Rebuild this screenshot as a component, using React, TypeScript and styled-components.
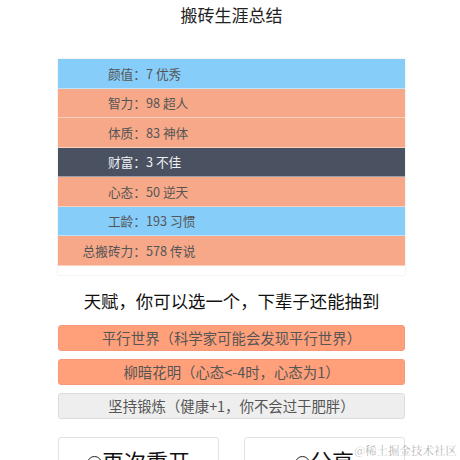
import React from 'react';
import styled, { createGlobalStyle } from 'styled-components';

type Tone = 'blue' | 'salmon' | 'dark';

interface Stat {
  label: string;
  value: string;
  tone: Tone;
}

interface Talent {
  name: string;
  desc: string;
  picked: boolean;
}

const stats: Stat[] = [
  { label: '颜值', value: '7 优秀', tone: 'blue' },
  { label: '智力', value: '98 超人', tone: 'salmon' },
  { label: '体质', value: '83 神体', tone: 'salmon' },
  { label: '财富', value: '3 不佳', tone: 'dark' },
  { label: '心态', value: '50 逆天', tone: 'salmon' },
  { label: '工龄', value: '193 习惯', tone: 'blue' },
  { label: '总搬砖力', value: '578 传说', tone: 'salmon' },
];

const talents: Talent[] = [
  { name: '平行世界', desc: '科学家可能会发现平行世界', picked: true },
  { name: '柳暗花明', desc: '心态<-4时，心态为1', picked: true },
  { name: '坚持锻炼', desc: '健康+1，你不会过于肥胖', picked: false },
];

const toneBg: Record<Tone, string> = {
  blue: '#87cdf9',
  salmon: '#f7a889',
  dark: '#4a5261',
};

const GlobalStyle = createGlobalStyle`
  body {
    margin: 0;
    background: #fff;
    font-family: "Noto Sans CJK SC", "Noto Sans", sans-serif;
  }
`;

const Page = styled.div`
  position: relative;
  height: 460px;
  overflow: hidden;
  padding: 0 55px 0 58px;
`;

const Title = styled.h1`
  margin: 3px 0 0;
  font-size: 17px;
  font-weight: 400;
  line-height: 24px;
  text-align: center;
  color: #222;
`;

const Card = styled.div`
  margin-top: 32px;
  padding-bottom: 9px;
  box-shadow: 0 0 2px rgba(0, 0, 0, 0.12);
  background: #fff;
`;

const Row = styled.div<{ $tone: Tone }>`
  display: grid;
  grid-template-columns: 88px 1fr;
  align-items: center;
  height: 28.5px;
  border-bottom: 1px solid rgba(255, 255, 255, 0.45);
  background: ${(p) => toneBg[p.$tone]};
  color: ${(p) => (p.$tone === 'dark' ? '#eef0f3' : '#555')};
  font-size: 12.7px;
`;

const Label = styled.span`
  text-align: right;
`;

const Heading = styled.h2`
  margin: 14px 0 0;
  font-size: 17.4px;
  font-weight: 400;
  line-height: 24px;
  text-align: center;
  color: #111;
`;

const TalentList = styled.div`
  display: flex;
  flex-direction: column;
  gap: 8px;
  margin-top: 12px;
`;

const TalentItem = styled.div<{ $picked: boolean }>`
  height: 24px;
  display: flex;
  align-items: center;
  justify-content: center;
  border-radius: 3px;
  border: 1px solid ${(p) => (p.$picked ? '#f5997a' : '#dcdcdc')};
  background: ${(p) => (p.$picked ? '#ffa07a' : '#eeeeee')};
  color: #555;
  font-size: 14.4px;
`;

const Actions = styled.div`
  display: grid;
  grid-template-columns: 161px 161px;
  justify-content: space-between;
  margin-top: 18px;
`;

const ActionButton = styled.button`
  height: 50px;
  display: flex;
  align-items: flex-start;
  justify-content: center;
  padding-top: 9px;
  border: 1px solid #e2e2e2;
  border-radius: 3px;
  background: #fff;
  color: #111;
  font-family: inherit;
  font-size: 22px;
  line-height: 26px;
`;

const Ring = styled.span`
  display: inline-block;
  width: 13px;
  height: 13px;
  margin-top: 9px;
  border: 1.5px solid #222;
  border-radius: 50%;
`;

const Watermark = styled.div`
  position: absolute;
  right: 3px;
  bottom: 2px;
  font-family: "Noto Serif CJK SC", "Noto Sans CJK SC", serif;
  font-size: 11.5px;
  color: rgba(120, 120, 120, 0.55);
`;

const App: React.FC = () => {
  return (
    <>
      <GlobalStyle />
      <Page>
        <Title>搬砖生涯总结</Title>
        <Card>
          {stats.map((s) => (
            <Row key={s.label} $tone={s.tone}>
              <Label>{s.label}：</Label>
              <span>{s.value}</span>
            </Row>
          ))}
        </Card>
        <Heading>天赋，你可以选一个，下辈子还能抽到</Heading>
        <TalentList>
          {talents.map((t) => (
            <TalentItem key={t.name} $picked={t.picked}>
              {t.name}（{t.desc}）
            </TalentItem>
          ))}
        </TalentList>
        <Actions>
          <ActionButton>
            <Ring />
            再次重开
          </ActionButton>
          <ActionButton>
            <Ring />
            分享
          </ActionButton>
        </Actions>
        <Watermark>@稀土掘金技术社区</Watermark>
      </Page>
    </>
  );
};

export default App;
